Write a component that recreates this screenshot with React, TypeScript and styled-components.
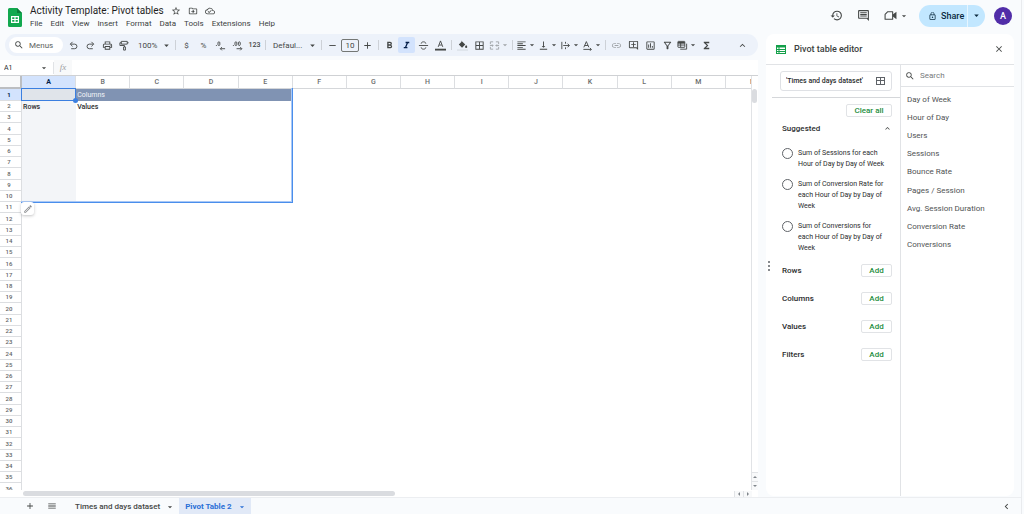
import React from 'react';
import styled, { createGlobalStyle, css } from 'styled-components';
import {
  MdStarBorder, MdOutlineDriveFileMove, MdOutlineCloudDone, MdHistory, MdOutlineInsertComment,
  MdLockOutline, MdArrowDropDown, MdSearch, MdOutlinePrint, MdRemove, MdAdd,
  MdBorderAll, MdFormatAlignLeft, MdVerticalAlignBottom, MdLink, MdOutlineAddComment,
  MdOutlineInsertChart, MdOutlineFilterAlt, MdFunctions, MdExpandLess, MdKeyboardArrowLeft,
  MdClose, MdMenu, MdOutlineEdit, MdFormatItalic, MdFormatBold,
} from 'react-icons/md';

const ink = '#444746';
const dark = '#2b2d2e';
const line = '#e1e3e6';
const blue = '#3b7fe0';
const green = '#1e8e3e';

const Global = createGlobalStyle`
  *, *::before, *::after { box-sizing: border-box; }
  html, body, #root { height: 100%; }
  body { margin: 0; background: #f9fbfd; color: ${ink}; font-family: Roboto, "Liberation Sans", sans-serif; font-size: 8px; }
  button, input, select { font: inherit; color: inherit; margin: 0; padding: 0; border: 0; background: none; }
  svg { display: block; flex: none; }
`;

const Page = styled.div`
  display: flex;
  flex-direction: column;
  height: 100vh;
  margin-right: 2px;
  border-right: 1px solid #e9ebee;
  overflow: hidden;
`;

/* Header */
const Header = styled.header`
  display: flex;
  align-items: flex-start;
  height: 34px;
  flex: none;
  padding: 0 9px 0 8px;
`;
const Logo = styled.svg`
  width: 14px;
  height: 19px;
  margin-top: 8px;
`;
const Titles = styled.div`
  flex: 1;
  padding: 4px 0 0 8px;
`;
const TitleRow = styled.div`
  display: flex;
  align-items: center;
  height: 14px;
  gap: 7px;
  svg { width: 10px; height: 10px; }
`;
const Title = styled.h1`
  margin: 0;
  font-size: 10px;
  font-weight: 400;
  line-height: 14px;
  color: #1f1f1f;
`;
const MenuBar = styled.nav`
  display: flex;
  gap: 8px;
  height: 12px;
`;
const MenuItem = styled.button`
  font-size: 8px;
  line-height: 12px;
  color: #3c3f3e;
`;
const Actions = styled.div`
  display: flex;
  align-items: center;
  height: 31px;
`;
const ActionButton = styled.button`
  display: flex;
  align-items: center;
  margin-right: 14px;
  &:nth-child(3) { margin-right: 10px; }
  svg { width: 13px; height: 13px; }
  svg + svg { width: 10px; height: 10px; margin-left: 2px; }
`;
const ShareGroup = styled.div`
  display: flex;
  height: 22px;
  border-radius: 11px;
  background: #c2e7ff;
  color: #0b2a3f;
  overflow: hidden;
`;
const Share = styled.button`
  display: flex;
  align-items: center;
  gap: 4px;
  width: 49px;
  padding-left: 9px;
  font-size: 9px;
  font-weight: 500;
  border-right: 1px solid #e6f5ff;
  svg { width: 9px; height: 10px; }
`;
const ShareMore = styled.button`
  display: flex;
  align-items: center;
  justify-content: center;
  width: 17px;
  svg { width: 11px; height: 11px; }
`;
const Avatar = styled.button`
  width: 18px;
  height: 18px;
  margin-left: 9px;
  border-radius: 50%;
  background: #512da8;
  color: #fff;
  font-size: 9px;
  font-weight: 500;
`;

/* Main area */
const Main = styled.div`
  display: flex;
  flex: 1;
  min-height: 0;
`;
const Sheet = styled.main`
  display: flex;
  flex-direction: column;
  flex: 1;
  min-width: 0;
`;
const Toolbar = styled.div`
  display: flex;
  align-items: center;
  flex: none;
  height: 22px;
  margin: 0 0 4px 5px;
  padding: 0 7px 0 4px;
  border-radius: 11px;
  background: #edf2fa;
`;
const MenuSearch = styled.label`
  display: flex;
  align-items: center;
  gap: 5px;
  width: 54px;
  height: 16px;
  margin-right: 2px;
  padding-left: 5px;
  border-radius: 8px;
  background: #fff;
  svg { width: 10px; height: 10px; }
  input { width: 30px; outline: 0; }
  input::placeholder { color: #5c5f5e; opacity: 1; }
`;
const Tool = styled.button<{ $on?: boolean; $drop?: boolean; $dim?: boolean }>`
  display: flex;
  align-items: center;
  justify-content: center;
  flex: none;
  width: ${p => (p.$drop ? 22 : 17)}px;
  height: 16px;
  border-radius: 2px;
  font-size: 8px;
  ${p => p.$on && css`background: #d3e3fd; color: #041e49;`}
  ${p => p.$dim && css`opacity: 0.45;`}
  svg { width: 11px; height: 11px; }
  svg + svg { width: 10px; height: 10px; }
`;
const SmallTool = styled(Tool)`
  font-size: 7px;
  font-weight: 500;
`;
const Sep = styled.span`
  flex: none;
  width: 1px;
  height: 10px;
  margin: 0 2px;
  background: #cdd1d7;
`;
const Picker = styled.span<{ $w: number }>`
  display: flex;
  align-items: center;
  flex: none;
  width: ${p => p.$w}px;
  padding: 0 1px 0 5px;
  select { appearance: none; flex: 1; min-width: 0; outline: 0; font-size: 8px; }
  svg { width: 11px; height: 11px; }
`;
const SizeBox = styled.input`
  width: 18px;
  height: 13px;
  border: 1px solid #747775;
  border-radius: 2px;
  text-align: center;
  outline: 0;
`;
const Spacer = styled.span`
  flex: 1;
`;

const FormulaBar = styled.div`
  display: flex;
  align-items: center;
  flex: none;
  height: 15px;
  background: #fff;
`;
const NameBox = styled.label`
  display: flex;
  align-items: center;
  width: 54px;
  height: 12px;
  padding: 0 4px;
  border-right: 1px solid ${line};
  input { flex: 1; min-width: 0; outline: 0; font-size: 7px; color: ${dark}; }
  svg { width: 10px; height: 10px; }
`;
const Fx = styled.span`
  width: 18px;
  text-align: center;
  background: #f8f9fa;
  color: #9a9d9f;
  font: italic 9px/15px "Liberation Serif", serif;
`;
const FormulaInput = styled.input`
  flex: 1;
  height: 15px;
  outline: 0;
`;

const GridArea = styled.div`
  display: flex;
  flex: 1;
  min-height: 0;
  background: #fff;
  border-top: 1px solid #cfd1d4;
`;
const Cells = styled.div`
  position: relative;
  flex: 1;
  min-width: 0;
  overflow: hidden;
`;
const Table = styled.table`
  width: 780px;
  table-layout: fixed;
  border-collapse: separate;
  border-spacing: 0;
  font-size: 7px;
  line-height: 8px;
  th, td { padding: 0; overflow: hidden; white-space: nowrap; }
  tbody tr { height: 11px; }
  tbody tr:nth-child(4n) { height: 12px; }
  tbody tr:first-child { height: 12px; }
`;
const Corner = styled.th`
  width: 22px;
  height: 13px;
  background: #f8f9fa;
  border-right: 2px solid #bcbec1;
  border-bottom: 2px solid #bcbec1;
`;
const ColHead = styled.th<{ $on?: boolean }>`
  height: 13px;
  font-size: 7px;
  font-weight: ${p => (p.$on ? 700 : 500)};
  color: ${p => (p.$on ? '#041e49' : '#6a6d6d')};
  background: ${p => (p.$on ? '#d3e3fd' : '#fff')};
  border-right: 1px solid #dcdee1;
  border-bottom: 1px solid #d5d7da;
`;
const RowHead = styled.th<{ $on?: boolean }>`
  font-size: 6px;
  font-weight: ${p => (p.$on ? 700 : 500)};
  color: ${p => (p.$on ? '#041e49' : '#626565')};
  background: ${p => (p.$on ? '#d3e3fd' : '#fff')};
  border-right: 1px solid #dcdee1;
  border-bottom: 1px solid #dcdee1;
  && { padding-right: 3px; }
`;
const Cell = styled.td<{ $kind?: 'head' | 'side' | 'corner' }>`
  && { padding-left: 1px; }
  color: ${p => (p.$kind === 'head' ? '#f1f4f8' : dark)};
  background: ${p => (p.$kind === 'head' ? '#8093b3' : p.$kind === 'side' ? '#f3f5f8' : p.$kind === 'corner' ? '#e0e4ea' : '#fff')};
  font-weight: ${p => (p.$kind === 'head' ? 400 : 500)};
`;
const PivotRange = styled.div`
  position: absolute;
  left: 21px;
  top: 12px;
  width: 272px;
  height: 115px;
  border: solid #4a8eec;
  border-width: 0 1px 1px 0;
  box-shadow: inset -1px -1px 0 #a9c8f6;
  pointer-events: none;
`;
const ActiveCell = styled.div`
  position: absolute;
  left: 21px;
  top: 12px;
  width: 55px;
  height: 13px;
  border: 1px solid ${blue};
  &::after {
    content: '';
    position: absolute;
    right: -3px;
    bottom: -3px;
    width: 5px;
    height: 5px;
    border-radius: 50%;
    background: ${blue};
  }
`;
const EditChip = styled.button`
  position: absolute;
  left: 21px;
  top: 126px;
  display: flex;
  align-items: center;
  justify-content: center;
  width: 13px;
  height: 13px;
  border-radius: 3px;
  background: #fff;
  color: #8a8c8f;
  box-shadow: 0 1px 3px rgba(60, 64, 67, 0.3);
  svg { width: 10px; height: 10px; }
`;
const VTrack = styled.div`
  display: flex;
  flex-direction: column;
  justify-content: space-between;
  flex: none;
  width: 7px;
  border-left: 1px solid ${line};
`;
const VThumb = styled.div`
  height: 14px;
  margin: 13px 1px 0 0;
  border-radius: 3px;
  background: #dadce0;
`;
const Steppers = styled.div<{ $row?: boolean }>`
  display: flex;
  flex-direction: ${p => (p.$row ? 'row' : 'column')};
`;
const Step = styled.button<{ $wide?: boolean }>`
  display: flex;
  align-items: center;
  justify-content: center;
  width: ${p => (p.$wide ? 9 : 6)}px;
  height: ${p => (p.$wide ? 6 : 9)}px;
  border: solid ${line};
  border-width: ${p => (p.$wide ? '0 0 0 1px' : '1px 0 0')};
  background: #f8f9fa;
  color: #80868b;
  svg { width: 4px; height: 4px; }
`;
const HTrack = styled.div`
  display: flex;
  align-items: center;
  justify-content: space-between;
  flex: none;
  height: 7px;
  padding: 0 6px 0 23px;
  background: #fff;
`;
const HThumb = styled.div`
  width: 51%;
  height: 5px;
  border-radius: 3px;
  background: #dadce0;
`;

/* Side panel */
const Panel = styled.aside`
  position: relative;
  display: flex;
  flex-direction: column;
  flex: none;
  width: 248px;
  margin: 0 7px 1px 8px;
  border-radius: 8px;
  background: #fff;
`;
const PanelHead = styled.div`
  display: flex;
  align-items: center;
  flex: none;
  height: 31px;
  padding: 0 10px;
  border-bottom: 1px solid ${line};
  button svg { width: 10px; height: 10px; }
`;
const PanelTitle = styled.h2`
  flex: 1;
  margin: 0 0 0 8px;
  font-size: 9px;
  font-weight: 500;
  color: #3c3f3e;
`;
const PanelBody = styled.div`
  display: flex;
  flex: 1;
  min-height: 0;
`;
const Settings = styled.div`
  flex: none;
  width: 135px;
  border-right: 1px solid ${line};
`;
const RangeBox = styled.label`
  display: flex;
  align-items: center;
  gap: 5px;
  height: 20px;
  margin: 6px 8px 0 14px;
  padding: 0 5px;
  border: 1px solid #dfe1e5;
  border-radius: 3px;
  input { flex: 1; min-width: 0; outline: 0; color: ${dark}; font-size: 7px; font-weight: 500; }
  svg { width: 10px; height: 10px; }
`;
const Divider = styled.hr`
  margin: 6px 0 6px 6px;
  border: 0;
  border-top: 1px solid #d5d7da;
`;
const Outlined = styled.button<{ $w: number }>`
  display: block;
  width: ${p => p.$w}px;
  height: 13px;
  margin-left: auto;
  border: 1px solid ${line};
  border-radius: 2px;
  color: ${green};
  font-size: 8px;
  line-height: 11px;
  font-weight: 500;
`;
const Section = styled.section`
  padding: 0 8px 0 16px;
`;
const SectionHead = styled.div`
  display: flex;
  align-items: center;
  justify-content: space-between;
  height: 22px;
  h3 { margin: 0; font-size: 8px; font-weight: 500; color: ${dark}; }
  svg { width: 9px; height: 9px; }
`;
const Options = styled.div`
  display: flex;
  flex-direction: column;
  gap: 9px;
  margin: 9px 0 2px;
`;
const Option = styled.label`
  display: flex;
  gap: 5px;
  padding-right: 5px;
  font-size: 7px;
  line-height: 11px;
  color: ${dark};
  input {
    appearance: none;
    flex: none;
    width: 11px;
    height: 11px;
    border: 1px solid #5f6368;
    border-radius: 50%;
  }
`;
const FieldRow = styled.div`
  display: flex;
  align-items: center;
  height: 28px;
  h3 { margin: 0; font-size: 8px; font-weight: 500; color: ${dark}; }
`;
const Fields = styled.div`
  flex: 1;
  min-width: 0;
`;
const FieldSearch = styled.label`
  display: flex;
  align-items: center;
  gap: 5px;
  height: 22px;
  padding-left: 4px;
  border-bottom: 1px solid ${line};
  svg { width: 10px; height: 10px; }
  input { flex: 1; min-width: 0; outline: 0; }
  input::placeholder { color: #777a7c; opacity: 1; }
`;
const FieldList = styled.ul`
  display: grid;
  grid-auto-rows: 1fr;
  align-items: center;
  height: 164px;
  margin: 3px 0 0;
  padding: 0 0 0 6px;
  list-style: none;
  color: #505354;
`;
const Grip = styled.div`
  position: absolute;
  left: 2px;
  top: 227px;
  display: flex;
  flex-direction: column;
  gap: 2px;
  i { width: 2px; height: 2px; border-radius: 50%; background: #5f6368; }
`;

/* Sheet tabs */
const Tabs = styled.footer`
  display: flex;
  align-items: center;
  flex: none;
  height: 17px;
  padding: 0 9px 0 25px;
  border-top: 1px solid #eceef1;
`;
const TabIcon = styled.button`
  margin-right: 12px;
  svg { width: 10px; height: 10px; }
`;
const Tab = styled.button<{ $on?: boolean }>`
  display: flex;
  align-items: center;
  gap: 5px;
  height: 17px;
  padding: 1px 4px 0 6px;
  font-size: 8px;
  font-weight: ${p => (p.$on ? 700 : 500)};
  color: ${p => (p.$on ? '#2a6fd6' : ink)};
  background: ${p => (p.$on ? '#e1e9f7' : 'transparent')};
  svg { width: 10px; height: 10px; }
`;

const SheetsLogo = () => (
  <Logo viewBox="0 0 14 19" aria-hidden="true">
    <path d="M1.5 0H9l5 5v12.5a1.500 1.500 0 0 1-1.500 1.500h-11A1.500 1.500 0 0 1 0 17.500v-16A1.500 1.500 0 0 1 1.500 0z" fill="#12a84f" />
    <path d="M9 0l5 5H9z" fill="#0b7d39" />
    <path d="M3 8h8v7H3zM4.200 9.200v1.700h2.200V9.200zm3.400 0v1.700h2.200V9.200zm-3.400 2.900v1.700h2.200v-1.700zm3.400 0v1.700h2.200v-1.700z" fill="#fff" fillRule="evenodd" />
  </Logo>
);
const Stroke = ({ children }: { children: React.ReactNode }) => (
  <svg viewBox="0 0 24 24" fill="none" stroke="currentColor" strokeWidth="2">{children}</svg>
);
const CameraIcon = () => (
  <Stroke>
    <path d="M7 5h9v14H2V10z" strokeLinejoin="round" />
    <path d="M17 11l5-4v10l-5-4z" fill="currentColor" />
  </Stroke>
);
const UndoIcon = () => (
  <Stroke><path d="M7 19h7.500a5 5 0 0 0 0-10H5.500M10 4L5 9l5 5" /></Stroke>
);
const RedoIcon = () => (
  <Stroke><path d="M17 19H9.500a5 5 0 0 1 0-10h9M14 4l5 5-5 5" /></Stroke>
);
const PaintIcon = () => (
  <Stroke><path d="M5 3h13v6H5zM5 6H2v6h10v3M10 15h4v7h-4zM18 6h3" /></Stroke>
);
const StrikeIcon = () => (
  <Stroke><path d="M2 12h20M17 8c0-2.500-2-4-5-4S7 5.500 7 8M7 16c0 2.500 2 4 5 4s5-1.500 5-4" /></Stroke>
);
const TextColorIcon = () => (
  <svg viewBox="0 0 12 12" fill="none" stroke="currentColor">
    <path d="M3.500 7.500L6 1l2.500 6.500M4.500 5.500h3" />
    <path d="M0 10.500h12" strokeWidth="2" />
  </svg>
);
const FillIcon = () => (
  <svg viewBox="0 0 12 12">
    <path d="M4.500 0.500L9 5 5.500 8.500 2 5l3-3M10 5.500c1 1.300 1.200 1.700 1.200 2.100a1.200 1.200 0 0 1-2.400 0c0-.4.2-.8 1.200-2.100z" fill="currentColor" />
    <path d="M0 10h12v2H0z" fill="#dfe5ec" />
  </svg>
);
const DecimalIcon = ({ more }: { more?: boolean }) => (
  <Stroke>
    <path d="M2 12h2" />
    <rect x="6.500" y="4" width="4" height="8" rx="2" />
    {more && <rect x="14" y="4" width="4" height="8" rx="2" />}
    {more ? <path d="M10 19h11M18 15.500l3.500 3.500-3.500 3.500" /> : <path d="M22 19H12M15 15.500L11.500 19l3.500 3.500" />}
  </Stroke>
);
const MergeIcon = () => (
  <Stroke>
    <path d="M9 4H3v5M15 4h6v5M9 20H3v-5M15 20h6v-5M2 12h7M22 12h-7M6.500 9.500L9 12l-2.500 2.500M17.500 9.500L15 12l2.500 2.500" />
  </Stroke>
);
const WrapIcon = () => (
  <Stroke><path d="M4 4v16M12 4v4M12 16v4M7 12h13M16.500 8l4 4-4 4" /></Stroke>
);
const RotateIcon = () => (
  <Stroke><path d="M4 16L9.500 3.500 15 16M6 12h7M3 20.500h17M17.500 17.500l3 3-3 3" /></Stroke>
);
const FilterViewIcon = () => (
  <Stroke>
    <rect x="2" y="3" width="15" height="13" rx="1" />
    <path d="M2 6h15" strokeWidth="4" />
    <path d="M2 11h15M8 6v10M21 8v12H7" />
  </Stroke>
);
const PivotIcon = () => (
  <svg width="10" height="9" viewBox="0 0 10 9" fill="none" stroke="#14a04a">
    <rect x="0.500" y="0.500" width="9" height="8" />
    <path d="M0 1.500h10" strokeWidth="2" />
    <path d="M0 4.500h10M0 6.500h10M3 2v6.500" />
  </svg>
);
const GridIcon = () => (
  <svg viewBox="0 0 10 10" fill="none" stroke="#5f6368">
    <rect x="0.500" y="1.500" width="8" height="7" />
    <path d="M0.500 4.500h8M4.500 1.500v7" />
  </svg>
);
const Caret = MdArrowDropDown;

const menus = ['File', 'Edit', 'View', 'Insert', 'Format', 'Data', 'Tools', 'Extensions', 'Help'];
const columns = 'ABCDEFGHIJKLMN'.split('');
const rows = Array.from({ length: 36 }, (_, i) => i + 1);
const suggestions = [
  'Sum of Sessions for each Hour of Day by Day of Week',
  'Sum of Conversion Rate for each Hour of Day by Day of Week',
  'Sum of Conversions for each Hour of Day by Day of Week',
];
const fields = ['Day of Week', 'Hour of Day', 'Users', 'Sessions', 'Bounce Rate', 'Pages / Session', 'Avg. Session Duration', 'Conversion Rate', 'Conversions'];
const values: Record<string, string> = { B1: 'Columns', A2: 'Rows', B2: 'Values' };

const cellKind = (col: number, row: number) => {
  if (row === 1 && col === 0) return 'corner';
  if (row === 1 && col < 5) return 'head';
  if (row <= 10 && col === 0) return 'side';
  return undefined;
};

const ToolbarRow = () => (
  <Toolbar role="toolbar" aria-label="Main toolbar">
    <MenuSearch><MdSearch /><input aria-label="Search the menus" placeholder="Menus" /></MenuSearch>
    <Tool aria-label="Undo"><UndoIcon /></Tool>
    <Tool aria-label="Redo"><RedoIcon /></Tool>
    <Tool aria-label="Print"><MdOutlinePrint /></Tool>
    <Tool aria-label="Paint format"><PaintIcon /></Tool>
    <Picker $w={40}><select aria-label="Zoom"><option>100%</option></select><Caret /></Picker>
    <Sep />
    <Tool aria-label="Currency">$</Tool>
    <Tool aria-label="Percent">%</Tool>
    <Tool aria-label="Decrease decimal places"><DecimalIcon /></Tool>
    <Tool aria-label="Increase decimal places"><DecimalIcon more /></Tool>
    <SmallTool aria-label="More formats">123</SmallTool>
    <Sep />
    <Picker $w={51}><select aria-label="Font"><option>Defaul...</option></select><Caret /></Picker>
    <Sep />
    <Tool aria-label="Decrease font size"><MdRemove /></Tool>
    <SizeBox aria-label="Font size" defaultValue="10" />
    <Tool aria-label="Increase font size"><MdAdd /></Tool>
    <Sep />
    <Tool aria-label="Bold"><MdFormatBold /></Tool>
    <Tool aria-label="Italic" $on><MdFormatItalic /></Tool>
    <Tool aria-label="Strikethrough"><StrikeIcon /></Tool>
    <Tool aria-label="Text colour"><TextColorIcon /></Tool>
    <Sep />
    <Tool aria-label="Fill colour"><FillIcon /></Tool>
    <Tool aria-label="Borders"><MdBorderAll /></Tool>
    <Tool aria-label="Merge cells" $drop $dim><MergeIcon /><Caret /></Tool>
    <Sep />
    <Tool aria-label="Horizontal align" $drop><MdFormatAlignLeft /><Caret /></Tool>
    <Tool aria-label="Vertical align" $drop><MdVerticalAlignBottom /><Caret /></Tool>
    <Tool aria-label="Text wrapping" $drop><WrapIcon /><Caret /></Tool>
    <Tool aria-label="Text rotation" $drop><RotateIcon /><Caret /></Tool>
    <Sep />
    <Tool aria-label="Insert link" $dim><MdLink /></Tool>
    <Tool aria-label="Insert comment"><MdOutlineAddComment /></Tool>
    <Tool aria-label="Insert chart"><MdOutlineInsertChart /></Tool>
    <Tool aria-label="Filter"><MdOutlineFilterAlt /></Tool>
    <Tool aria-label="Filter views" $drop><FilterViewIcon /><Caret /></Tool>
    <Tool aria-label="Functions"><MdFunctions /></Tool>
    <Spacer />
    <Tool aria-label="Hide the menus"><MdExpandLess /></Tool>
  </Toolbar>
);

const Grid = () => (
  <GridArea>
    <Cells>
      <Table>
        <thead>
          <tr>
            <Corner aria-label="Select all" />
            {columns.map((c, i) => <ColHead key={c} scope="col" $on={i === 0}>{c}</ColHead>)}
          </tr>
        </thead>
        <tbody>
          {rows.map(r => (
            <tr key={r}>
              <RowHead scope="row" $on={r === 1}>{r}</RowHead>
              {columns.map((c, i) => <Cell key={c} $kind={cellKind(i, r)}>{values[c + r]}</Cell>)}
            </tr>
          ))}
        </tbody>
      </Table>
      <PivotRange />
      <ActiveCell />
      <EditChip aria-label="Edit pivot table"><MdOutlineEdit /></EditChip>
    </Cells>
    <VTrack>
      <VThumb />
      <Steppers>
        <Step aria-label="Scroll up"><svg viewBox="0 0 4 4"><path d="M0 3l2-2 2 2z" fill="currentColor" /></svg></Step>
        <Step aria-label="Scroll down"><svg viewBox="0 0 4 4"><path d="M0 1l2 2 2-2z" fill="currentColor" /></svg></Step>
      </Steppers>
    </VTrack>
  </GridArea>
);

const PivotPanel = () => (
  <Panel>
    <PanelHead>
      <PivotIcon />
      <PanelTitle>Pivot table editor</PanelTitle>
      <button aria-label="Close"><MdClose /></button>
    </PanelHead>
    <PanelBody>
      <Settings>
        <RangeBox><input aria-label="Data range" defaultValue="'Times and days dataset'" /><GridIcon /></RangeBox>
        <Divider />
        <Section>
          <Outlined $w={46}>Clear all</Outlined>
          <SectionHead><h3>Suggested</h3><MdExpandLess /></SectionHead>
          <Options>
            {suggestions.map(s => <Option key={s}><input type="radio" name="suggestion" />{s}</Option>)}
          </Options>
          {['Rows', 'Columns', 'Values', 'Filters'].map(n => (
            <FieldRow key={n}><h3>{n}</h3><Outlined $w={31} aria-label={`Add ${n}`}>Add</Outlined></FieldRow>
          ))}
        </Section>
      </Settings>
      <Fields>
        <FieldSearch><MdSearch /><input aria-label="Search fields" placeholder="Search" /></FieldSearch>
        <FieldList>{fields.map(f => <li key={f}>{f}</li>)}</FieldList>
      </Fields>
    </PanelBody>
    <Grip><i /><i /><i /></Grip>
  </Panel>
);

export default function App() {
  return (
    <>
      <Global />
      <Page>
        <Header>
          <SheetsLogo />
          <Titles>
            <TitleRow>
              <Title>Activity Template: Pivot tables</Title>
              <MdStarBorder /><MdOutlineDriveFileMove /><MdOutlineCloudDone />
            </TitleRow>
            <MenuBar>{menus.map(m => <MenuItem key={m}>{m}</MenuItem>)}</MenuBar>
          </Titles>
          <Actions>
            <ActionButton aria-label="Version history"><MdHistory /></ActionButton>
            <ActionButton aria-label="Comments"><MdOutlineInsertComment /></ActionButton>
            <ActionButton aria-label="Start a call"><CameraIcon /><Caret /></ActionButton>
            <ShareGroup>
              <Share><MdLockOutline />Share</Share>
              <ShareMore aria-label="Share options"><Caret /></ShareMore>
            </ShareGroup>
            <Avatar aria-label="Account">A</Avatar>
          </Actions>
        </Header>
        <Main>
          <Sheet>
            <ToolbarRow />
            <FormulaBar>
              <NameBox><input aria-label="Name box" defaultValue="A1" /><Caret /></NameBox>
              <Fx>fx</Fx>
              <FormulaInput aria-label="Formula" />
            </FormulaBar>
            <Grid />
            <HTrack>
              <HThumb />
              <Steppers $row>
                <Step $wide aria-label="Scroll left"><svg viewBox="0 0 4 4"><path d="M3 0L1 2l2 2z" fill="currentColor" /></svg></Step>
                <Step $wide aria-label="Scroll right"><svg viewBox="0 0 4 4"><path d="M1 0l2 2-2 2z" fill="currentColor" /></svg></Step>
              </Steppers>
            </HTrack>
          </Sheet>
          <PivotPanel />
        </Main>
        <Tabs>
          <TabIcon aria-label="Add sheet"><MdAdd /></TabIcon>
          <TabIcon aria-label="All sheets"><MdMenu /></TabIcon>
          <Tab>Times and days dataset<Caret /></Tab>
          <Tab $on>Pivot Table 2<Caret /></Tab>
          <Spacer />
          <button aria-label="Show side panel"><MdKeyboardArrowLeft size={11} /></button>
        </Tabs>
      </Page>
    </>
  );
}
